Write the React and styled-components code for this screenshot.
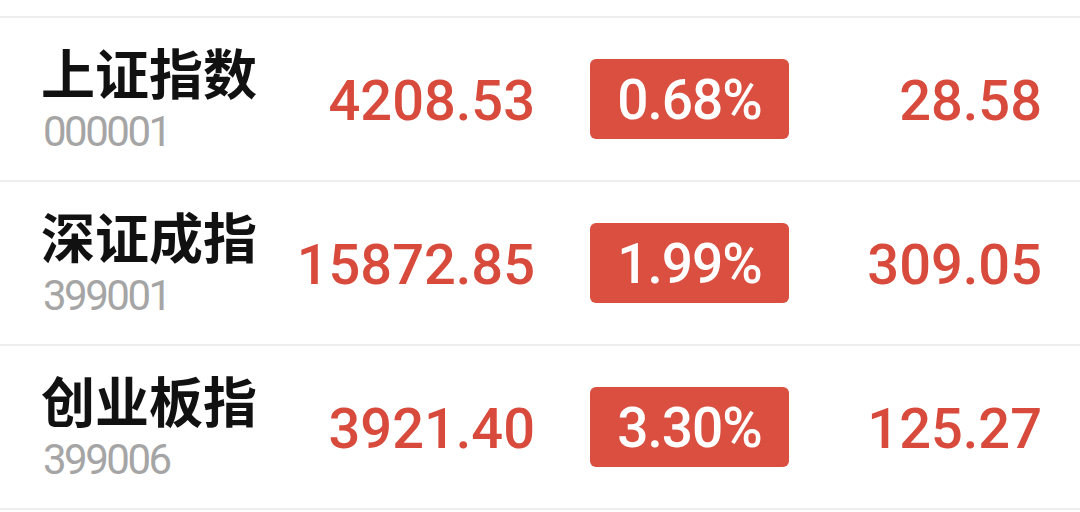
import styled, {createGlobalStyle} from 'styled-components';

const GlobalStyle = createGlobalStyle`
    html, body { margin:0; padding:0; background:#ffffff; }
    body { font-family: Roboto, "Noto Sans CJK SC", sans-serif; }
`;

const List = styled.div`
    padding-top:16px;
    width:1080px;
`;

const Row = styled.div`
    display:grid;
    grid-template-columns: 230px 264px 254px 1fr;
    align-items:center;
    height:162px;
    padding:0 38px 0 41px;
    border-top:2px solid #eeeeee;
    &:last-child { border-bottom:2px solid #eeeeee; }
`;

const NameBox = styled.div`
    display:flex;
    flex-direction:column;
    margin-top:-2px;
`;

const Name = styled.div`
    font-family: "Noto Sans CJK SC", sans-serif;
    font-weight:700;
    font-size:54px;
    line-height:58px;
    color:#111111;
`;

const Code = styled.div`
    font-family: Roboto, sans-serif;
    font-weight:400;
    font-size:42px;
    line-height:42px;
    letter-spacing:-2.5px;
    color:#a5a5a5;
    margin-top:10px;
    padding-left:2px;
`;

const Price = styled.div`
    justify-self:end;
    padding-top:4px;
    font-family: Roboto, sans-serif;
    font-weight:500;
    font-size:56px;
    color:${p => p.$up ? '#d84b3c' : '#2a9d4a'};
`;

const Badge = styled.div`
    justify-self:end;
    width:199px;
    height:80px;
    border-radius:6px;
    background:${p => p.$up ? '#da4f40' : '#2a9d4a'};
    color:#ffffff;
    display:flex;
    align-items:center;
    justify-content:center;
    padding-top:2px;
    box-sizing:border-box;
    font-family: Roboto, sans-serif;
    font-weight:500;
    font-size:55px;
    letter-spacing:-1px;
`;

const Change = styled(Price)``;

const rows = [
    {name:'上证指数', code:'000001', price:'4208.53', pct:'0.68%', chg:'28.58'},
    {name:'深证成指', code:'399001', price:'15872.85', pct:'1.99%', chg:'309.05'},
    {name:'创业板指', code:'399006', price:'3921.40', pct:'3.30%', chg:'125.27'},
];

export default function App() {
    return (
        <>
            <GlobalStyle />
            <List>
                {rows.map(r => (
                    <Row key={r.code}>
                        <NameBox>
                            <Name>{r.name}</Name>
                            <Code>{r.code}</Code>
                        </NameBox>
                        <Price $up>{r.price}</Price>
                        <Badge $up>{r.pct}</Badge>
                        <Change $up>{r.chg}</Change>
                    </Row>
                ))}
            </List>
        </>
    );
}
